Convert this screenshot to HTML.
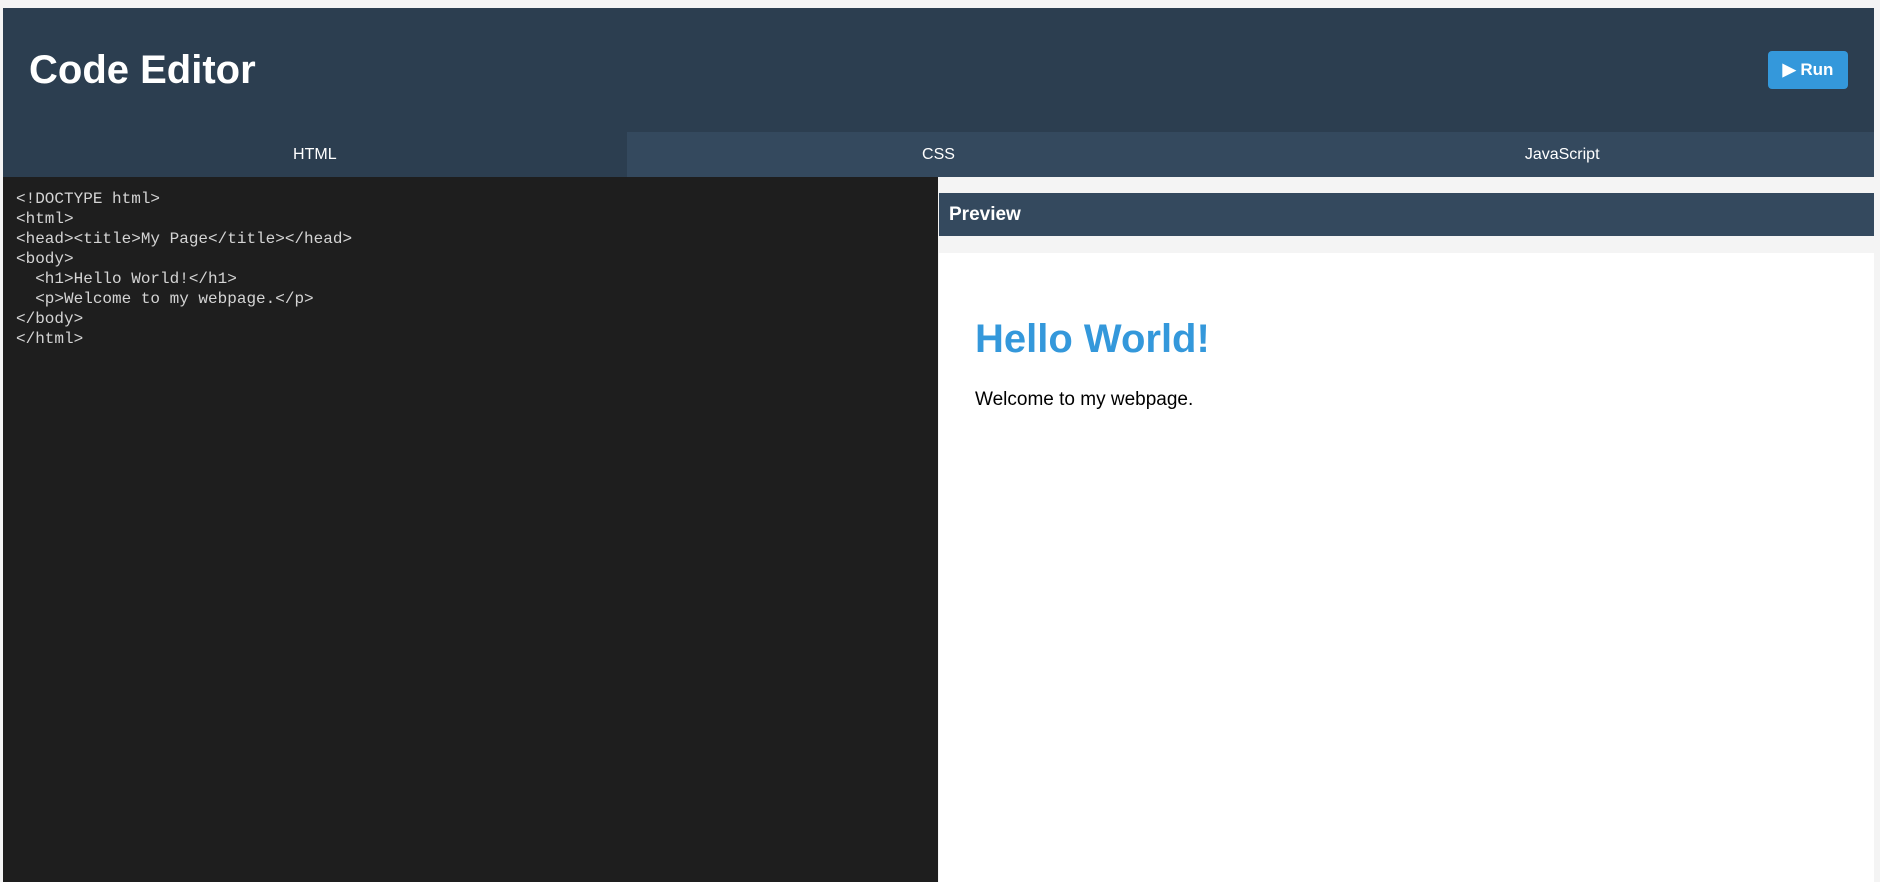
<!DOCTYPE html>
<html><head><style>
html,body{margin:0;padding:0;background:#f4f4f4;width:1880px;height:882px;overflow:hidden;font-family:"Liberation Sans",Arial,sans-serif}
#hdr{position:absolute;left:3px;top:8px;width:1871px;height:124px;background:#2c3e50}
#hdr h1{position:absolute;left:26px;top:0;margin:0;line-height:124px;font-size:40px;color:#fff;font-weight:bold}
#run{position:absolute;left:1765px;top:43px;width:80px;height:38px;background:#3498db;border-radius:4px;color:#fff;font-weight:bold;font-size:17px;line-height:38px;text-align:center}
#tabs{position:absolute;left:3px;top:132px;width:1871px;height:45px;display:flex}
#tabs div{flex:1;background:#34495e;color:#fff;font-size:16px;text-align:center;line-height:45px}
#tabs div.a{background:#2c3e50}
#ed{position:absolute;left:3px;top:177px;width:935px;height:705px;background:#1e1e1e;color:#d4d4d4;font-family:"Liberation Mono",monospace;font-size:16px;line-height:20px;white-space:pre;padding:12px 13px;box-sizing:border-box}
#ph{position:absolute;left:939px;top:193px;width:935px;height:43px;background:#34495e;color:#fff;font-weight:bold;font-size:19px;line-height:43px;padding-left:10px;box-sizing:border-box}
#pv{position:absolute;left:939px;top:253px;width:935px;height:629px;background:#fff}
#pv h2{position:absolute;left:36px;top:64px;margin:0;font-size:40px;color:#3498db;font-weight:bold}
#pv p{position:absolute;left:36px;top:136px;margin:0;font-size:19px;color:#000}
</style></head><body>
<div id="hdr"><h1>Code Editor</h1><div id="run">&#9654; Run</div></div>
<div id="tabs"><div class="a">HTML</div><div>CSS</div><div>JavaScript</div></div>
<div id="ed">&lt;!DOCTYPE html&gt;
&lt;html&gt;
&lt;head&gt;&lt;title&gt;My Page&lt;/title&gt;&lt;/head&gt;
&lt;body&gt;
  &lt;h1&gt;Hello World!&lt;/h1&gt;
  &lt;p&gt;Welcome to my webpage.&lt;/p&gt;
&lt;/body&gt;
&lt;/html&gt;</div>
<div id="ph">Preview</div>
<div id="pv"><h2>Hello World!</h2><p>Welcome to my webpage.</p></div>
</body></html>
